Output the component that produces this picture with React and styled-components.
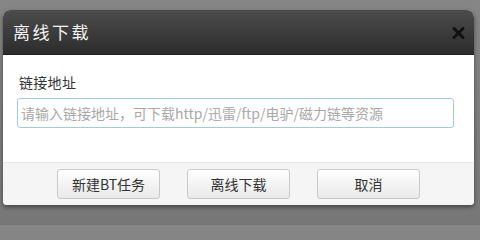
import React from "react";
import styled, { createGlobalStyle } from "styled-components";

const Global = createGlobalStyle`
  html, body { margin: 0; padding: 0; }
  body {
    width: 480px;
    height: 225px;
    overflow: hidden;
    background: linear-gradient(#868686, #777777);
    font-family: "Liberation Sans", "Noto Sans CJK SC", sans-serif;
  }
`;

const Stage = styled.div`
  padding: 10px 6px 0 3px;
`;

const Dialog = styled.div`
  width: 471px;
  height: 195px;
  display: flex;
  flex-direction: column;
  background: #fff;
  border-radius: 7px 7px 4px 4px;
  box-shadow: 0 2px 4px rgba(0, 0, 0, 0.45);
  overflow: hidden;
`;

const Header = styled.div`
  height: 45px;
  flex: none;
  display: flex;
  align-items: center;
  justify-content: space-between;
  padding: 0 8px 0 10px;
  background: linear-gradient(#4c4c4c, #2c2c2c);
  border-bottom: 1px solid #1e1e1e;
  box-sizing: border-box;
`;

const Title = styled.h1`
  margin: 0;
  font-family: "Noto Sans CJK SC", sans-serif;
  font-size: 17px;
  font-weight: 400;
  letter-spacing: 2.5px;
  color: #f4f4f4;
  line-height: 1;
  margin-top: -1px;
`;

const Close = styled.button`
  width: 16px;
  height: 16px;
  padding: 0;
  border: 0;
  background: none;
  display: flex;
  align-items: center;
  justify-content: center;
  margin-top: 1px;
`;

const Body = styled.div`
  flex: 1;
  padding: 17px 20px 0 14px;
  display: flex;
  flex-direction: column;
`;

const Label = styled.label`
  font-family: "Noto Sans CJK SC", sans-serif;
  font-size: 14px;
  color: #333;
  line-height: 20px;
  padding-left: 2px;
  letter-spacing: 0.3px;
`;

const Input = styled.input`
  margin-top: 6px;
  width: 437px;
  height: 30px;
  box-sizing: border-box;
  border: 1px solid #9fcae6;
  border-radius: 3px;
  padding: 0 3px;
  font-family: "Noto Sans CJK SC", sans-serif;
  font-size: 14px;
  color: #333;
  outline: none;
  &::placeholder { color: #a8a8a8; }
`;

const Footer = styled.div`
  height: 43px;
  flex: none;
  box-sizing: border-box;
  background: #f5f5f5;
  border-top: 1px solid #e6e6e6;
  display: flex;
  justify-content: center;
  align-items: flex-start;
  gap: 27px;
  padding-top: 6px;
`;

const Button = styled.button`
  width: 103px;
  height: 30px;
  box-sizing: border-box;
  border: 1px solid #c9c9c9;
  border-radius: 3px;
  background: linear-gradient(#ffffff, #e9e9e9);
  box-shadow: inset 0 1px 0 #fff;
  font-family: "Noto Sans CJK SC", sans-serif;
  font-size: 14px;
  color: #333;
  padding: 0;
`;

export default function App() {
  return (
    <>
      <Global />
      <Stage>
        <Dialog>
          <Header>
            <Title>离线下载</Title>
            <Close aria-label="关闭">
              <svg width="13" height="12" viewBox="0 0 13 12">
                <path d="M2 1.5 L11 10.5 M11 1.5 L2 10.5" stroke="#111" strokeWidth="3" strokeLinecap="round" />
              </svg>
            </Close>
          </Header>
          <Body>
            <Label>链接地址</Label>
            <Input placeholder="请输入链接地址，可下载http/迅雷/ftp/电驴/磁力链等资源" />
          </Body>
          <Footer>
            <Button>新建BT任务</Button>
            <Button>离线下载</Button>
            <Button>取消</Button>
          </Footer>
        </Dialog>
      </Stage>
    </>
  );
}
